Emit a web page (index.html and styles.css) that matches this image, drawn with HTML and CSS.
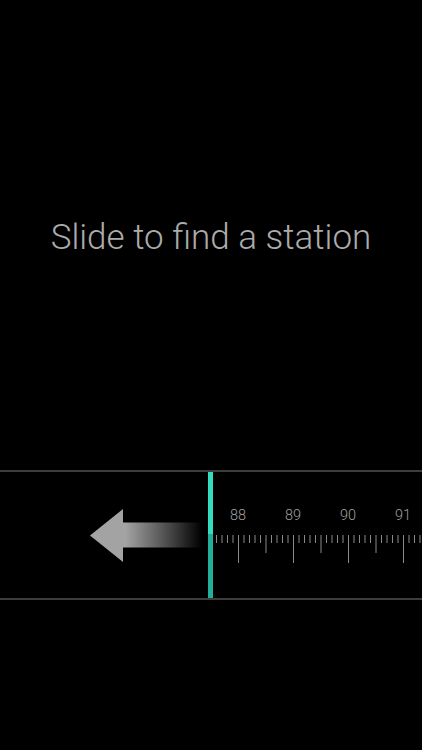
FILE: index.html
```html
<!DOCTYPE html>
<html>
<head>
<meta charset="utf-8">
<link rel="stylesheet" href="styles.css">
</head>
<body>
<main class="screen">
  <section class="prompt">
    <h1 class="prompt-text">Slide to find a station</h1>
  </section>
  <section class="dial">
    <div class="hint">
      <svg class="arrow" width="118" height="54" viewBox="0 0 118 54">
        <defs>
          <linearGradient id="fade" x1="0" y1="0" x2="1" y2="0">
            <stop offset="0" stop-color="#a3a3a3"/>
            <stop offset="0.3" stop-color="#a3a3a3"/>
            <stop offset="0.62" stop-color="#555"/>
            <stop offset="0.95" stop-color="#000"/>
          </linearGradient>
        </defs>
        <path d="M0 26.5 L33 0 L33 13.5 L118 13.5 L118 38.5 L33 38.5 L33 53 Z" fill="url(#fade)"/>
      </svg>
    </div>
    <div class="needle"></div>
    <div class="ruler">
      <div class="labels">
        <span>88</span><span>89</span><span>90</span><span>91</span>
      </div>
      <svg class="ticks" width="209" height="28" viewBox="0 0 209 28">
        <g stroke="#8a8a8a" stroke-width="1">
          <line x1="3.5" y1="0" x2="3.5" y2="8"/>
          <line x1="9" y1="0" x2="9" y2="8"/>
          <line x1="14.5" y1="0" x2="14.5" y2="8"/>
          <line x1="20" y1="0" x2="20" y2="8"/>
          <line x1="25.5" y1="0" x2="25.5" y2="28"/>
          <line x1="31" y1="0" x2="31" y2="8"/>
          <line x1="36.5" y1="0" x2="36.5" y2="8"/>
          <line x1="42" y1="0" x2="42" y2="8"/>
          <line x1="47.5" y1="0" x2="47.5" y2="8"/>
          <line x1="53" y1="0" x2="53" y2="18"/>
          <line x1="58.5" y1="0" x2="58.5" y2="8"/>
          <line x1="64" y1="0" x2="64" y2="8"/>
          <line x1="69.5" y1="0" x2="69.5" y2="8"/>
          <line x1="75" y1="0" x2="75" y2="8"/>
          <line x1="80.5" y1="0" x2="80.5" y2="28"/>
          <line x1="86" y1="0" x2="86" y2="8"/>
          <line x1="91.5" y1="0" x2="91.5" y2="8"/>
          <line x1="97" y1="0" x2="97" y2="8"/>
          <line x1="102.5" y1="0" x2="102.5" y2="8"/>
          <line x1="108" y1="0" x2="108" y2="18"/>
          <line x1="113.5" y1="0" x2="113.5" y2="8"/>
          <line x1="119" y1="0" x2="119" y2="8"/>
          <line x1="124.5" y1="0" x2="124.5" y2="8"/>
          <line x1="130" y1="0" x2="130" y2="8"/>
          <line x1="135.5" y1="0" x2="135.5" y2="28"/>
          <line x1="141" y1="0" x2="141" y2="8"/>
          <line x1="146.5" y1="0" x2="146.5" y2="8"/>
          <line x1="152" y1="0" x2="152" y2="8"/>
          <line x1="157.5" y1="0" x2="157.5" y2="8"/>
          <line x1="163" y1="0" x2="163" y2="18"/>
          <line x1="168.5" y1="0" x2="168.5" y2="8"/>
          <line x1="174" y1="0" x2="174" y2="8"/>
          <line x1="179.5" y1="0" x2="179.5" y2="8"/>
          <line x1="185" y1="0" x2="185" y2="8"/>
          <line x1="190.5" y1="0" x2="190.5" y2="28"/>
          <line x1="196" y1="0" x2="196" y2="8"/>
          <line x1="201.5" y1="0" x2="201.5" y2="8"/>
          <line x1="207" y1="0" x2="207" y2="8"/>
        </g>
      </svg>
    </div>
  </section>
</main>
</body>
</html>
```

FILE: styles.css
```css
html, body {
  margin: 0;
  padding: 0;
  background: #000;
}

.screen {
  width: 422px;
  height: 750px;
  overflow: hidden;
  background: #000;
  display: flex;
  flex-direction: column;
}

.prompt {
  height: 470px;
  display: flex;
  justify-content: center;
}

.prompt-text {
  margin: 217px 0 0;
  font-family: Roboto, "Liberation Sans", sans-serif;
  font-weight: 300;
  font-size: 35px;
  line-height: 42px;
  color: #ababab;
  letter-spacing: 0;
  white-space: nowrap;
}

.dial {
  height: 126px;
  border-top: 2px solid #3d3d3d;
  border-bottom: 2px solid #3d3d3d;
  display: flex;
}

.hint {
  width: 208px;
  display: flex;
  align-items: flex-start;
  padding-top: 37px;
  padding-left: 90px;
  box-sizing: border-box;
}

.arrow {
  display: block;
}

.needle {
  width: 5px;
  background: linear-gradient(to bottom, #33dcc0 0, #33dcc0 62px, #22ae98 62px, #22ae98 100%);
}

.ruler {
  flex: 1;
  display: flex;
  flex-direction: column;
  padding-top: 36px;
  overflow: hidden;
}

.labels {
  display: flex;
  margin-left: -2.5px;
  height: 16px;
}

.labels span {
  flex: 0 0 55px;
  text-align: center;
  font-family: Roboto, "Liberation Sans", sans-serif;
  font-weight: 300;
  font-size: 14.5px;
  line-height: 16px;
  color: #a0a0a0;
}

.ticks {
  display: block;
  margin-top: 11px;
}
```
